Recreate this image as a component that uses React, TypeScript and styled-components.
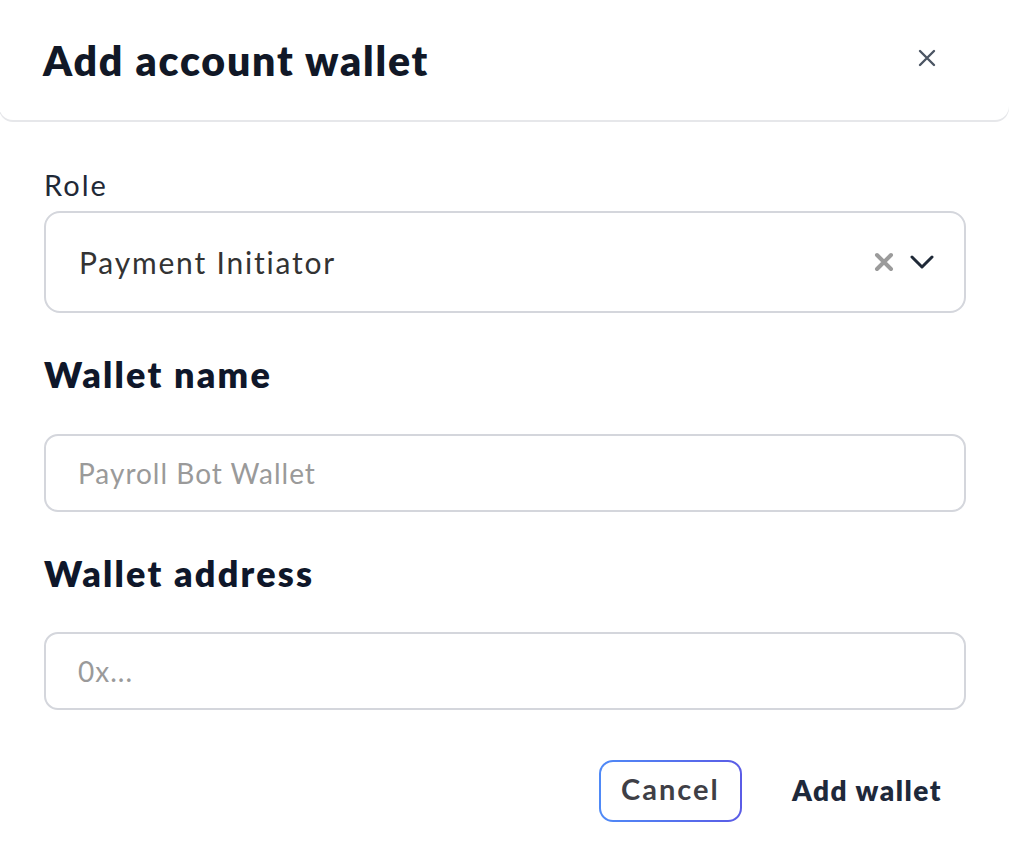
import React from "react"
import styled, { createGlobalStyle } from "styled-components"

const GlobalStyle = createGlobalStyle`
  html, body {
    margin: 0;
    padding: 0;
    background: #ffffff;
  }
  body {
    font-family: "Lato", "Noto Sans", sans-serif;
    -webkit-font-smoothing: antialiased;
  }
`

const Modal = styled.div`
  width: 1010px;
  min-height: 842px;
  background: #ffffff;
  overflow: hidden;
`

const Header = styled.header`
  height: 120px;
  padding: 0 44px;
  display: flex;
  align-items: center;
  justify-content: space-between;
  background: #ffffff;
  border-radius: 0 0 14px 14px;
  box-shadow: 0 2px 0 #e6e7ea;
  margin: 0 1px 0 -1px;
`

const Title = styled.h1`
  margin: 0;
  font-size: 41px;
  font-weight: 800;
  color: #111827;
  letter-spacing: 1.8px;
`

const CloseButton = styled.button`
  width: 40px;
  height: 40px;
  margin: -4px 18px 0 0;
  border: none;
  background: transparent;
  display: flex;
  align-items: center;
  justify-content: center;
  padding: 0;
  cursor: pointer;
  color: #4b5563;
`

const Form = styled.form`
  padding: 48px 44px 0;
  display: flex;
  flex-direction: column;
`

const Field = styled.div<{ $gap: number }>`
  display: flex;
  flex-direction: column;
  gap: ${p => p.$gap}px;
  margin-bottom: 40px;
`

const Label = styled.label<{ $bold?: boolean }>`
  font-size: ${p => (p.$bold ? 36 : 29)}px;
  line-height: ${p => (p.$bold ? 42 : 34)}px;
  font-weight: ${p => (p.$bold ? 800 : 400)};
  letter-spacing: ${p => (p.$bold ? 2.2 : 2)}px;
  color: ${p => (p.$bold ? "#0f172a" : "#1f2937")};
`

const SelectBox = styled.div`
  height: 102px;
  box-sizing: border-box;
  border: 2px solid #d4d6dc;
  border-radius: 16px;
  padding: 0 30px 0 33px;
  display: flex;
  align-items: center;
  justify-content: space-between;
`

const SelectValue = styled.span`
  font-size: 30px;
  letter-spacing: 1.8px;
  color: #333333;
`

const SelectIcons = styled.div`
  display: flex;
  align-items: center;
  gap: 16px;
`

const Input = styled.input`
  height: 78px;
  box-sizing: border-box;
  border: 2px solid #d4d6dc;
  border-radius: 14px;
  padding: 0 32px;
  font-family: inherit;
  font-size: 28px;
  letter-spacing: 1px;
  color: #333333;
  outline: none;
  &::placeholder {
    color: #9a9a9a;
  }
`

const Actions = styled.div`
  display: flex;
  justify-content: flex-end;
  align-items: center;
  gap: 26px;
  margin-top: 10px;
`

const CancelButton = styled.button`
  height: 62px;
  width: 143px;
  padding: 0 0 5px;
  border: 2px solid transparent;
  border-radius: 14px;
  background:
    linear-gradient(#ffffff, #ffffff) padding-box,
    linear-gradient(90deg, #4f8af7, #5b5ce6) border-box;
  font-family: inherit;
  font-size: 29px;
  font-weight: 700;
  letter-spacing: 2px;
  color: #3f3f46;
  cursor: pointer;
`

const PrimaryButton = styled.button`
  height: 62px;
  padding: 0 24px 3px;
  border: none;
  background: transparent;
  font-family: inherit;
  font-size: 28px;
  font-weight: 800;
  letter-spacing: 1.5px;
  color: #1e293b;
  cursor: pointer;
`

export default () => {
  return (
    <Modal>
      <GlobalStyle />
      <Header>
        <Title>Add account wallet</Title>
        <CloseButton aria-label="Close">
          <svg width="18" height="18" viewBox="0 0 18 18" fill="none">
            <path d="M2 2L16 16M16 2L2 16" stroke="currentColor" strokeWidth="2.4" strokeLinecap="round" />
          </svg>
        </CloseButton>
      </Header>
      <Form onSubmit={e => e.preventDefault()}>
        <Field $gap={9}>
          <Label>Role</Label>
          <SelectBox>
            <SelectValue>Payment Initiator</SelectValue>
            <SelectIcons>
              <svg width="20" height="20" viewBox="0 0 20 20" fill="none">
                <path d="M3 3L17 17M17 3L3 17" stroke="#9b9b9b" strokeWidth="4" strokeLinecap="round" />
              </svg>
              <svg width="24" height="14" viewBox="0 0 24 14" fill="none">
                <path d="M2 2L12 12L22 2" stroke="#1f2937" strokeWidth="3" strokeLinecap="round" strokeLinejoin="round" />
              </svg>
            </SelectIcons>
          </SelectBox>
        </Field>
        <Field $gap={39}>
          <Label $bold>Wallet name</Label>
          <Input placeholder="Payroll Bot Wallet" />
        </Field>
        <Field $gap={38}>
          <Label $bold>Wallet address</Label>
          <Input placeholder="0x..." />
        </Field>
        <Actions>
          <CancelButton type="button">Cancel</CancelButton>
          <PrimaryButton type="submit">Add wallet</PrimaryButton>
        </Actions>
      </Form>
    </Modal>
  )
}
